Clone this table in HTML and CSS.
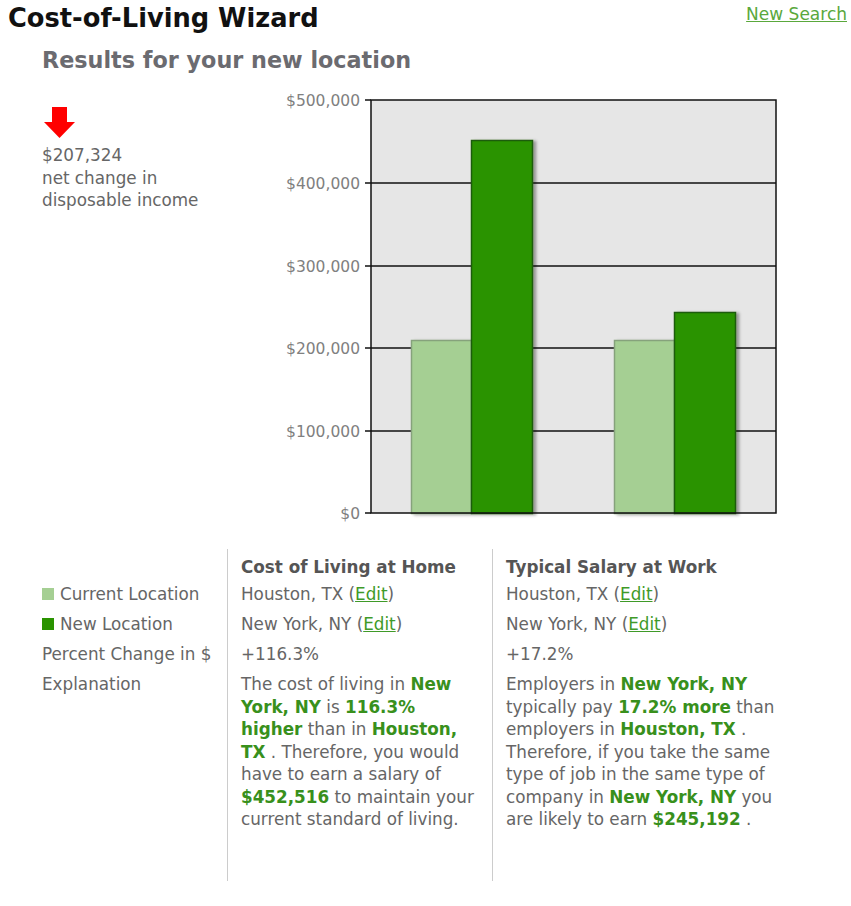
FILE: index.html
```html
<!DOCTYPE html>
<html>
<head>
<meta charset="utf-8">
<title>Cost-of-Living Wizard</title>
<link rel="stylesheet" href="styles.css">
</head>
<body>
<div class="header">
  <h1 class="title">Cost-of-Living Wizard</h1>
  <a class="new-search" href="#">New Search</a>
</div>
<div class="content">
  <h2 class="subtitle">Results for your new location</h2>
  <div class="summary">
    <div class="net">
      <svg class="arrow" width="32" height="32" viewBox="0 0 32 32"><polygon points="8,0 23,0 23,15 31,15 15.5,31 0,15 8,15" fill="#ff0000"/></svg>
      <div class="net-text">$207,324<br>net change in<br>disposable income</div>
    </div>
    <svg class="chart" width="510" height="436" viewBox="0 0 510 436">
      <defs>
        <filter id="sh" x="-20%" y="-10%" width="150%" height="130%">
          <feDropShadow dx="3" dy="1" stdDeviation="1.6" flood-color="#000" flood-opacity="0.35"/>
        </filter>
      </defs>
      <rect x="101" y="10" width="405" height="413" fill="#e6e6e6"/>
      <g stroke="#111" stroke-width="1.5">
        <line x1="101" y1="93" x2="506" y2="93"/>
        <line x1="101" y1="176" x2="506" y2="176"/>
        <line x1="101" y1="258" x2="506" y2="258"/>
        <line x1="101" y1="341" x2="506" y2="341"/>
        <line x1="95" y1="10" x2="101" y2="10"/>
        <line x1="95" y1="93" x2="101" y2="93"/>
        <line x1="95" y1="176" x2="101" y2="176"/>
        <line x1="95" y1="258" x2="101" y2="258"/>
        <line x1="95" y1="341" x2="101" y2="341"/>
        <line x1="95" y1="423" x2="101" y2="423"/>
      </g>
      <g class="axis-label" text-anchor="end">
        <text x="90" y="16">$500,000</text>
        <text x="90" y="99">$400,000</text>
        <text x="90" y="182">$300,000</text>
        <text x="90" y="264">$200,000</text>
        <text x="90" y="347">$100,000</text>
        <text x="90" y="429">$0</text>
      </g>
      <g filter="url(#sh)">
        <rect x="141.5" y="250.5" width="60" height="173" fill="#a5cf93" stroke="#86a27c" stroke-width="1.5"/>
        <rect x="201.5" y="50.5" width="61" height="373" fill="#2a9300" stroke="#1f5c10" stroke-width="1.5"/>
        <rect x="344.5" y="250.5" width="60" height="173" fill="#a5cf93" stroke="#86a27c" stroke-width="1.5"/>
        <rect x="404.5" y="222.5" width="61" height="201" fill="#2a9300" stroke="#1f5c10" stroke-width="1.5"/>
      </g>
      <rect x="101" y="10" width="405" height="413" fill="none" stroke="#111" stroke-width="1.5"/>
    </svg>
  </div>
  <div class="results">
    <div class="cell label head"></div>
    <div class="cell col head">Cost of Living at Home</div>
    <div class="cell col head">Typical Salary at Work</div>

    <div class="cell label row"><span class="swatch light"></span>Current Location</div>
    <div class="cell col row">Houston, TX (<a href="#">Edit</a>)</div>
    <div class="cell col row">Houston, TX (<a href="#">Edit</a>)</div>

    <div class="cell label row"><span class="swatch dark"></span>New Location</div>
    <div class="cell col row">New York, NY (<a href="#">Edit</a>)</div>
    <div class="cell col row">New York, NY (<a href="#">Edit</a>)</div>

    <div class="cell label row">Percent Change in $</div>
    <div class="cell col row">+116.3%</div>
    <div class="cell col row">+17.2%</div>

    <div class="cell label expl">Explanation</div>
    <div class="cell col expl c2">The cost of living in <b>New York, NY</b> is <b>116.3% higher</b> than in <b>Houston, TX</b> . Therefore, you would have to earn a salary of <b>$452,516</b> to maintain your current standard of living.</div>
    <div class="cell col expl c3">Employers in <b>New York, NY</b> typically pay <b>17.2% more</b> than employers in <b>Houston, TX</b> . Therefore, if you take the same type of job in the same type of company in <b>New York, NY</b> you are likely to earn <b>$245,192</b> .</div>
  </div>
</div>
</body>
</html>
```
FILE: styles.css
```css
html, body {
  margin: 0;
  padding: 0;
  background: #ffffff;
}
body {
  font-family: "DejaVu Sans", Verdana, sans-serif;
  color: #666666;
  font-size: 16.8px;
}
.header {
  display: flex;
  justify-content: space-between;
  align-items: flex-start;
  padding: 3px 4px 0 8px;
}
.title {
  margin: 0;
  font-size: 25.7px;
  line-height: 30px;
  font-weight: bold;
  color: #111111;
}
.new-search {
  margin-top: 1px;
  font-size: 17px;
  line-height: 20px;
  color: #5aa83c;
  text-decoration: underline;
}
.content {
  padding-left: 42px;
}
.subtitle {
  margin: 14px 0 0 0;
  font-size: 22.3px;
  line-height: 26px;
  font-weight: bold;
  color: #6b6b70;
}
.summary {
  display: flex;
  margin-top: 17px;
}
.net {
  width: 228px;
  padding-top: 17px;
  line-height: 22.5px;
}
.arrow {
  display: block;
  margin: 0 0 5px 2px;
}
.chart {
  display: block;
}
.axis-label {
  font-family: "DejaVu Sans", sans-serif;
  font-size: 15.5px;
  fill: #808080;
}
.results {
  display: grid;
  grid-template-columns: 185px 265px 310px;
  margin-top: 23px;
}
.cell {
  line-height: 20px;
}
.col {
  border-left: 1px solid #cccccc;
  padding-left: 13px;
  padding-right: 11px;
}
.head {
  padding-top: 8px;
  height: 22px;
  font-weight: bold;
  color: #555555;
}
.row {
  height: 30px;
  display: flex;
  align-items: center;
}
.label.row {
  gap: 6px;
}
.expl {
  padding-top: 4px;
  padding-bottom: 50px;
  line-height: 22.5px;
}
.c3 {
  padding-right: 20px;
}
.swatch {
  display: inline-block;
  width: 12px;
  height: 12px;
}
.swatch.light {
  background: #a5cf93;
}
.swatch.dark {
  background: #2a9300;
}
.results a {
  color: #3f9a28;
  text-decoration: underline;
}
.results b {
  color: #38901c;
  font-weight: bold;
}
```
